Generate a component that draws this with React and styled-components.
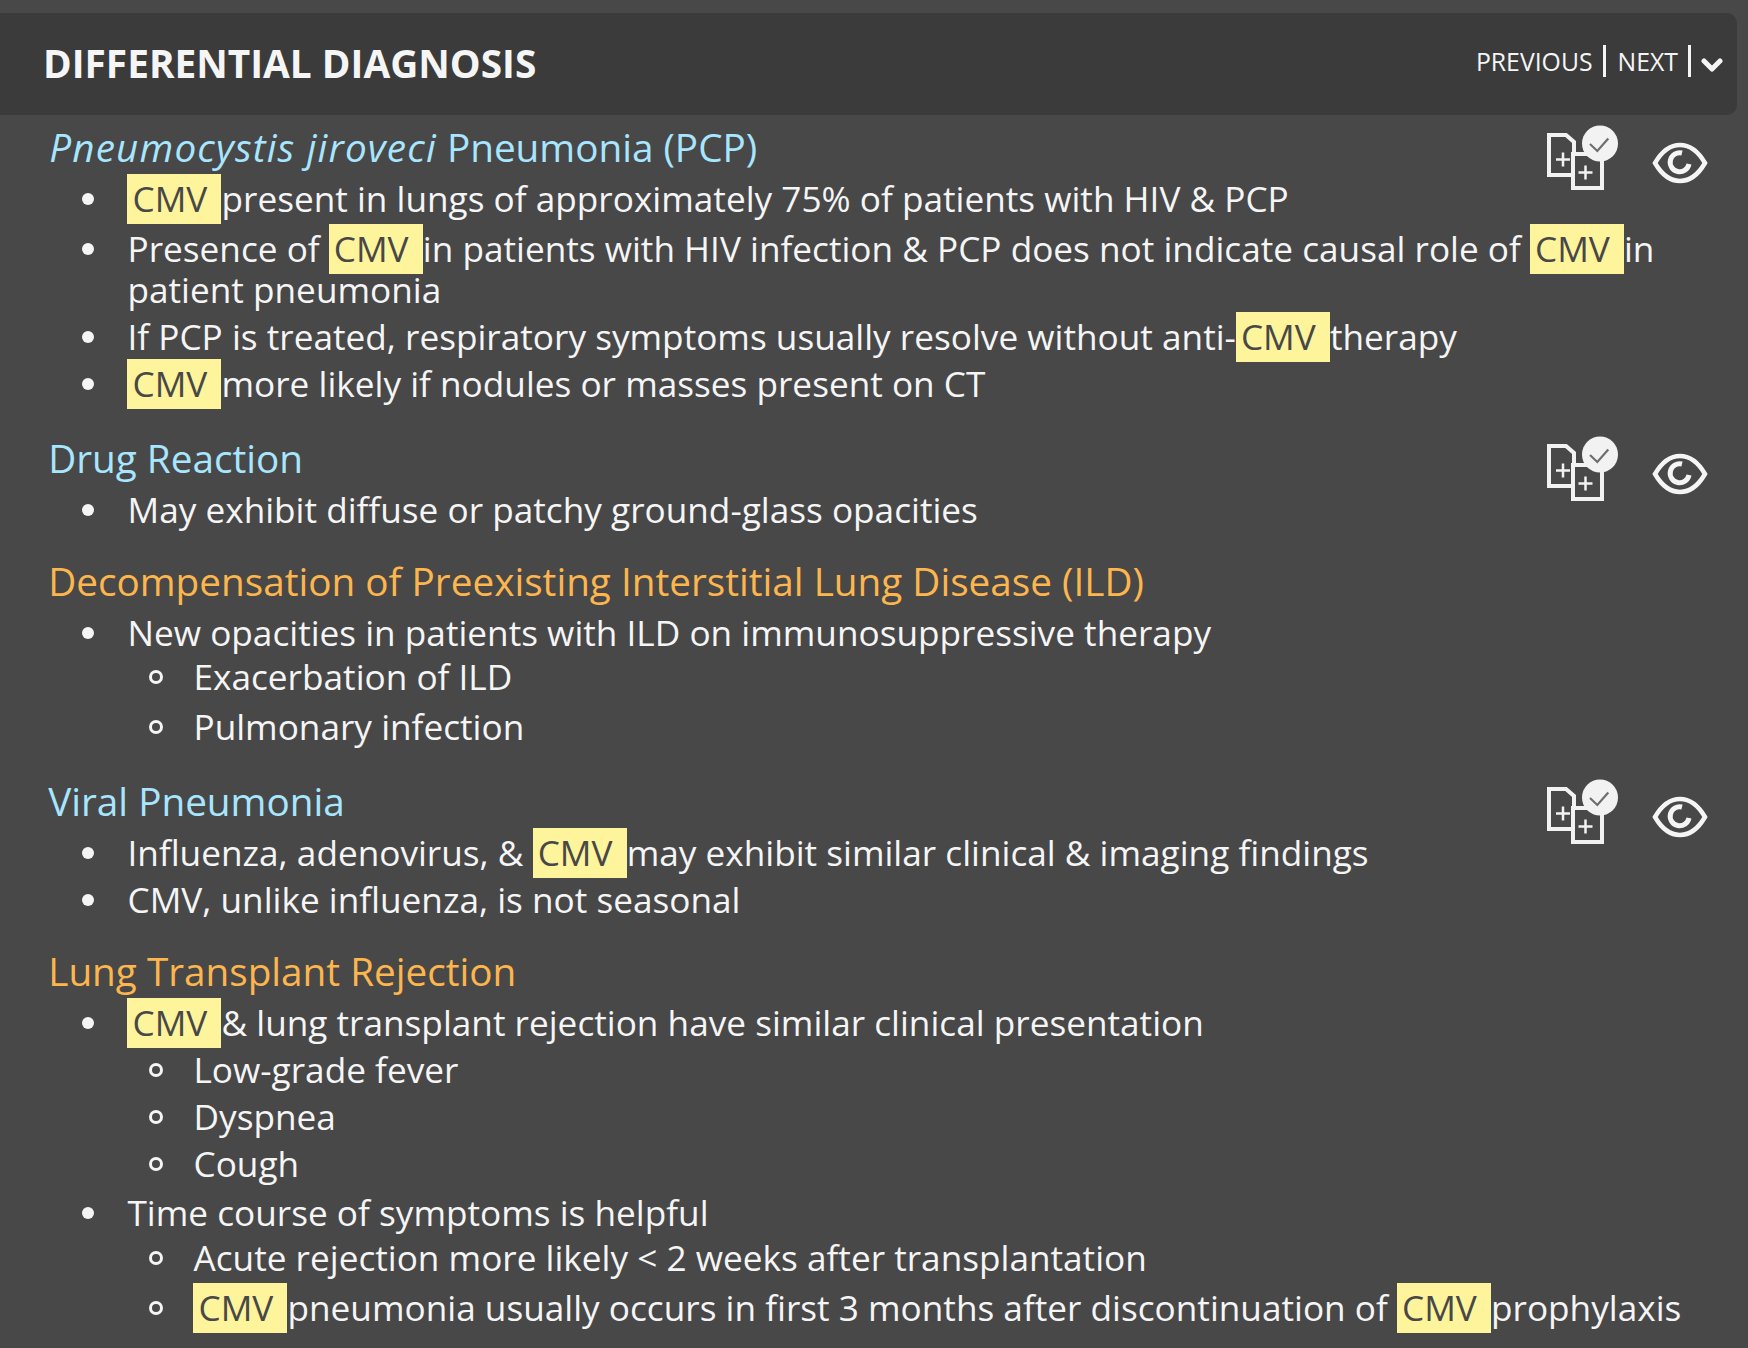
import React from 'react'
import styled, { createGlobalStyle } from 'styled-components'

const GlobalStyle = createGlobalStyle`
    html, body {
        margin: 0;
        padding: 0;
        background-color: #484848;
    }
    body {
        font-family: "Open Sans", "Noto Sans", sans-serif;
        color: #f5f5f5;
    }
`

const Page = styled.div`
    width: 1748px;
    height: 1348px;
    overflow: hidden;
    padding-top: 13px;
    box-sizing: border-box;
`

const Header = styled.header`
    width: 1737px;
    height: 102px;
    box-sizing: border-box;
    padding: 0 14px 3px 43px;
    display: flex;
    align-items: center;
    justify-content: space-between;
    background-color: #3b3b3b;
    border-radius: 0 10px 10px 0;
`

const Title = styled.h2`
    margin: 0;
    font-size: 38.8px;
    font-weight: 700;
`

const Pager = styled.nav`
    display: flex;
    align-items: center;
    margin-bottom: 3px;
    font-size: 24.8px;
    color: #f5f5f5;
`

const PagerLink = styled.a`
    padding: 0 10px 0 12px;
    border-right: 3px solid #f5f5f5;
    line-height: 32px;
`

const Chevron = styled.svg`
    width: 22px;
    height: 16px;
    margin: 7px 0 0 10px;
    fill: none;
    stroke: #f5f5f5;
    stroke-width: 5;
    stroke-linecap: round;
    stroke-linejoin: round;
`

const Content = styled.main`
    padding: 8px 0 0 48.2px;
`

const Section = styled.section`
    margin-bottom: ${props => props.$gap}px;
`

const HeadingRow = styled.div`
    display: flex;
    justify-content: space-between;
    height: 50px;
    margin-bottom: 5px;
`

const Heading = styled.h3`
    margin: 0;
    font-size: 38.7px;
    font-weight: 400;
    line-height: 48px;
    color: ${props => props.$warn ? '#fdb64e' : '#a8e6ff'};

    em {
        padding-left: 1px;
        font-style: italic;
        letter-spacing: 1.15px;
    }
`

const Actions = styled.div`
    display: flex;
    align-items: flex-start;
    gap: 33px;
    padding-right: 40px;
`

const List = styled.ul`
    margin: 0;
    padding: 0 40px 0 79.3px;
    list-style: none;
    font-size: 35.2px;
    line-height: 41px;
`

const SubList = styled.ul`
    margin: 0;
    padding: 0 0 0 66px;
    list-style: none;
`

const Item = styled.li`
    position: relative;
    margin-top: ${props => props.$top || 0}px;

    &::before {
        content: '';
        position: absolute;
        left: -45px;
        top: 15px;
        width: 12px;
        height: 12px;
        border-radius: 50%;
        background-color: #f5f5f5;
    }
`

const SubItem = styled.li`
    position: relative;
    margin-top: ${props => props.$top || 0}px;

    &::before {
        content: '';
        position: absolute;
        left: -44px;
        top: 14px;
        width: 14px;
        height: 14px;
        box-sizing: border-box;
        border: 3px solid #f5f5f5;
        border-radius: 50%;
    }
`

const Mark = styled.mark`
    display: inline-block;
    height: 50px;
    line-height: 48px;
    width: 94px;
    box-sizing: border-box;
    padding-left: 5px;
    margin: -4px 0 -5px 0;
    background-color: #fef49c;
    color: #484848;
`

const DocsSvg = styled.svg`
    width: 72px;
    height: 66px;
    margin-top: 2px;
`

const EyeSvg = styled.svg`
    width: 56px;
    height: 42px;
    margin-top: 19px;
`

const DocsIcon = () => (
    <DocsSvg viewBox="0 0 72 66" fill="none" stroke="#f2f2f2" strokeWidth="4">
        <path d="M2 10H19l8 7v33H2z" />
        <path d="M9 34.500h14M16 27.500v14" strokeWidth="2.500" />
        <path d="M26 29H55v34H26z" fill="#484848" />
        <path d="M31.500 47.500h14M38.500 40.500v14" strokeWidth="2.500" />
        <circle cx="53" cy="18.500" r="18" fill="#f2f2f2" stroke="none" />
        <path d="M43 19l7.300 7L61.300 13.500" stroke="#6e6e6e" strokeWidth="2.200" />
    </DocsSvg>
)

const EyeIcon = () => (
    <EyeSvg viewBox="0 0 56 42" fill="none" stroke="#f5f5f5" strokeWidth="4.500">
        <path d="M3 21C10 9 18 3 28 3s18 6 25 18c-7 12-15 18-25 18S10 33 3 21z" />
        <path d="M37 22a9.500 9.500 0 1 1-7-11" strokeWidth="5" />
    </EyeSvg>
)

const RowActions = () => (
    <Actions>
        <DocsIcon />
        <EyeIcon />
    </Actions>
)

const App = () => (
    <Page>
        <GlobalStyle />
        <Header>
            <Title>DIFFERENTIAL DIAGNOSIS</Title>
            <Pager>
                <PagerLink>PREVIOUS</PagerLink>
                <PagerLink>NEXT</PagerLink>
                <Chevron viewBox="0 0 22 16"><path d="M3 4l8 8 8-8" /></Chevron>
            </Pager>
        </Header>
        <Content>
            <Section $gap={30}>
                <HeadingRow>
                    <Heading><em>Pneumocystis jiroveci</em> Pneumonia (PCP)</Heading>
                    <RowActions />
                </HeadingRow>
                <List>
                    <Item><Mark>CMV</Mark>present in lungs of approximately 75% of patients with HIV &amp; PCP</Item>
                    <Item $top={9}>Presence of <Mark>CMV</Mark>in patients with HIV infection &amp; PCP does not indicate causal role of <Mark>CMV</Mark>in patient pneumonia</Item>
                    <Item $top={6}>If PCP is treated, respiratory symptoms usually resolve without anti-<Mark>CMV</Mark>therapy</Item>
                    <Item $top={6}><Mark>CMV</Mark>more likely if nodules or masses present on CT</Item>
                </List>
            </Section>
            <Section $gap={27}>
                <HeadingRow>
                    <Heading>Drug Reaction</Heading>
                    <RowActions />
                </HeadingRow>
                <List>
                    <Item>May exhibit diffuse or patchy ground-glass opacities</Item>
                </List>
            </Section>
            <Section $gap={30}>
                <HeadingRow>
                    <Heading $warn>Decompensation of Preexisting Interstitial Lung Disease (ILD)</Heading>
                </HeadingRow>
                <List>
                    <Item>New opacities in patients with ILD on immunosuppressive therapy
                        <SubList>
                            <SubItem $top={3}>Exacerbation of ILD</SubItem>
                            <SubItem $top={9}>Pulmonary infection</SubItem>
                        </SubList>
                    </Item>
                </List>
            </Section>
            <Section $gap={27}>
                <HeadingRow>
                    <Heading>Viral Pneumonia</Heading>
                    <RowActions />
                </HeadingRow>
                <List>
                    <Item>Influenza, adenovirus, &amp; <Mark>CMV</Mark>may exhibit similar clinical &amp; imaging findings</Item>
                    <Item $top={6}>CMV, unlike influenza, is not seasonal</Item>
                </List>
            </Section>
            <Section>
                <HeadingRow>
                    <Heading $warn>Lung Transplant Rejection</Heading>
                </HeadingRow>
                <List>
                    <Item><Mark>CMV</Mark>&amp; lung transplant rejection have similar clinical presentation
                        <SubList>
                            <SubItem $top={6}>Low-grade fever</SubItem>
                            <SubItem $top={6}>Dyspnea</SubItem>
                            <SubItem $top={6}>Cough</SubItem>
                        </SubList>
                    </Item>
                    <Item $top={8}>Time course of symptoms is helpful
                        <SubList>
                            <SubItem $top={4}>Acute rejection more likely &lt; 2 weeks after transplantation</SubItem>
                            <SubItem $top={9}><Mark>CMV</Mark>pneumonia usually occurs in first 3 months after discontinuation of <Mark>CMV</Mark>prophylaxis</SubItem>
                        </SubList>
                    </Item>
                </List>
            </Section>
        </Content>
    </Page>
)

export default App
